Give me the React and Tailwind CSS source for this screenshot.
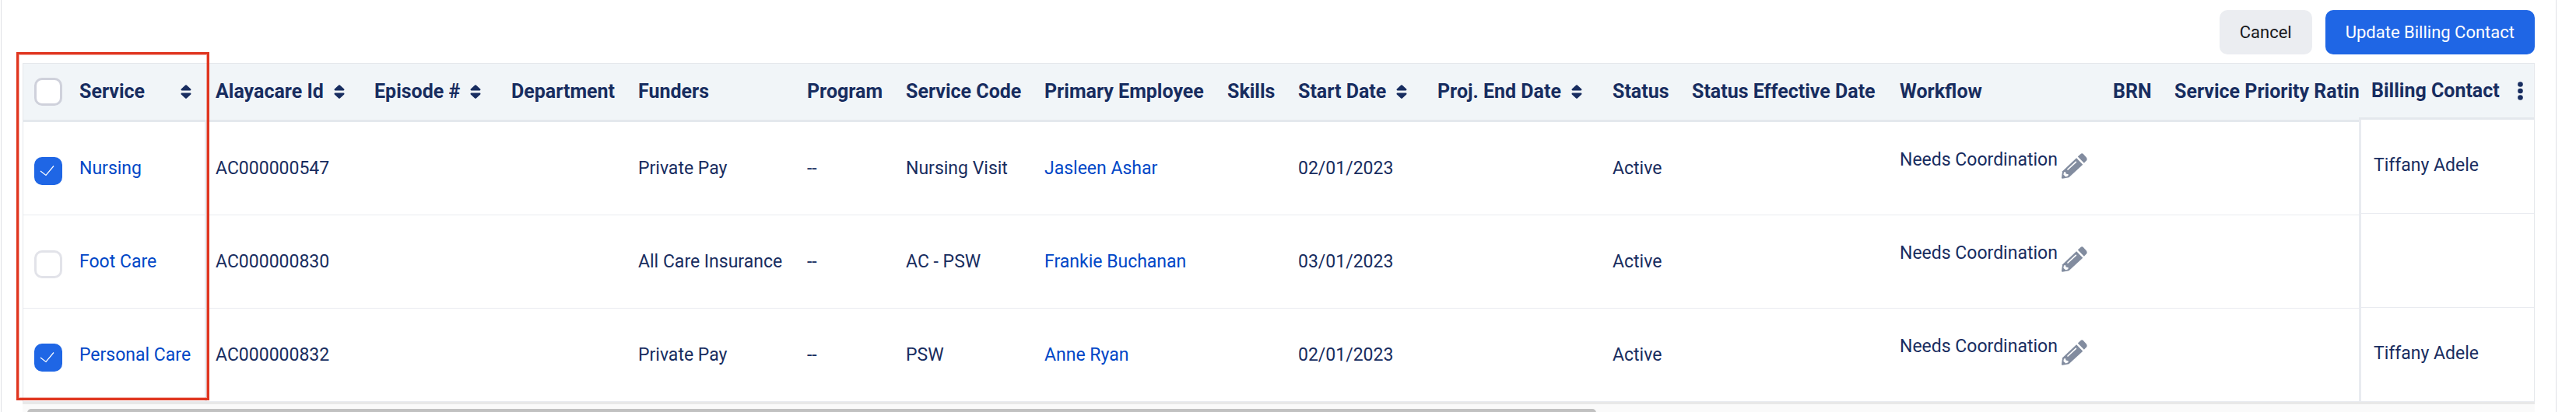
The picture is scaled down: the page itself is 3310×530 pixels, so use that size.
import React, { useState } from 'react';

const columns = [
  { key: 'id', label: 'Alayacare Id', width: 'w-[204px]', sortable: true },
  { key: 'episode', label: 'Episode #', width: 'w-[176px]', sortable: true },
  { key: 'department', label: 'Department', width: 'w-[163px]' },
  { key: 'funders', label: 'Funders', width: 'w-[217px]' },
  { key: 'program', label: 'Program', width: 'w-[127px]' },
  { key: 'code', label: 'Service Code', width: 'w-[178px]' },
  { key: 'employee', label: 'Primary Employee', width: 'w-[235px]' },
  { key: 'skills', label: 'Skills', width: 'w-[91px]' },
  { key: 'start', label: 'Start Date', width: 'w-[179px]', sortable: true },
  { key: 'end', label: 'Proj. End Date', width: 'w-[225px]', sortable: true },
  { key: 'status', label: 'Status', width: 'w-[102px]' },
  { key: 'statusDate', label: 'Status Effective Date', width: 'w-[267px]' },
  { key: 'workflow', label: 'Workflow', width: 'w-[274px]' },
  { key: 'brn', label: 'BRN', width: 'w-[79px]' },
  { key: 'rating', label: 'Service Priority Rating', width: 'w-[290px]' },
];

const services = [
  {
    name: 'Nursing',
    id: 'AC000000547',
    funders: 'Private Pay',
    program: '--',
    code: 'Nursing Visit',
    employee: 'Jasleen Ashar',
    start: '02/01/2023',
    status: 'Active',
    workflow: 'Needs Coordination',
    contact: 'Tiffany Adele',
  },
  {
    name: 'Foot Care',
    id: 'AC000000830',
    funders: 'All Care Insurance',
    program: '--',
    code: 'AC - PSW',
    employee: 'Frankie Buchanan',
    start: '03/01/2023',
    status: 'Active',
    workflow: 'Needs Coordination',
    contact: '',
  },
  {
    name: 'Personal Care',
    id: 'AC000000832',
    funders: 'Private Pay',
    program: '--',
    code: 'PSW',
    employee: 'Anne Ryan',
    start: '02/01/2023',
    status: 'Active',
    workflow: 'Needs Coordination',
    contact: 'Tiffany Adele',
  },
];

const SortIcon = () => (
  <svg className="w-3.5 h-[18px] shrink-0" viewBox="0 0 14 18" fill="currentColor" aria-hidden="true">
    <path d="M6.2 0.6Q7 -0.2 7.8 0.6L13.2 5.6Q14 7.4 12.4 7.4H1.6Q0 7.4 0.8 5.6Z" />
    <path d="M6.2 17.4Q7 18.2 7.8 17.4L13.2 12.4Q14 10.6 12.4 10.6H1.6Q0 10.6 0.8 12.4Z" />
  </svg>
);

const PencilIcon = () => (
  <svg className="w-[33px] h-[33px]" viewBox="0 0 33 33" fill="#828c9f" aria-hidden="true">
    <path d="M20.8 4.6L24.6 0.9Q26.2 -0.4 27.8 1L31.6 5.2Q33.4 7.4 32.2 9.2L28.9 12.8Z" />
    <path d="M19.1 6.2L27.3 14.7L9.4 31.2L1.2 32.7Q0 32.7 0 31.4L1.1 23.3Z" />
    <path d="M8 21L18.4 11.4" stroke="#fff" strokeWidth="1.7" strokeLinecap="round" />
    <path d="M3 24.4L5 24L5.6 26.6L8.8 27.2L8.4 29.3L5.4 30.4L2.4 27.8Z" fill="#fff" />
  </svg>
);

const KebabIcon = () => (
  <svg className="w-[7px] h-6" viewBox="0 0 7 24" fill="currentColor" aria-hidden="true">
    <circle cx="3.5" cy="3.5" r="3.3" />
    <circle cx="3.5" cy="12" r="3.3" />
    <circle cx="3.5" cy="20.5" r="3.3" />
  </svg>
);

const Checkbox = ({ label, checked, onChange, header }) => (
  <label className="grid shrink-0">
    <input
      type="checkbox"
      aria-label={label}
      checked={checked}
      onChange={onChange}
      className={`col-start-1 row-start-1 appearance-none w-9 h-9 rounded-[10px] border-3 bg-white checked:bg-[#1f66e5] checked:border-[#1f66e5] ${
        header ? 'border-[#cfd1db]' : 'border-[#e2e3e9]'
      }`}
    />
    {checked && (
      <svg className="col-start-1 row-start-1 w-9 h-9 pointer-events-none" viewBox="0 0 36 36" fill="none" aria-hidden="true">
        <path d="M8 18L15 23.5L25 11.5" stroke="#fff" strokeWidth="1.2" />
      </svg>
    )}
  </label>
);

const Cell = ({ column, service }) => {
  const value = service[column.key];

  if (column.key === 'workflow') {
    return (
      <td className="h-[120px] border-b border-[#e9ebf0] pl-[11px] pt-[35px] align-top">
        <div className="flex items-start gap-[5px]">
          <span>{value}</span>
          <button aria-label={`Edit workflow for ${service.name}`} className="pt-[5px]">
            <PencilIcon />
          </button>
        </div>
      </td>
    );
  }

  return (
    <td className="h-[120px] border-b border-[#e9ebf0] pl-[11px]">
      {column.key === 'employee' ? <a href="#employee" className="text-[#0047c7]">{value}</a> : value}
    </td>
  );
};

const App = () => {
  const [selected, setSelected] = useState(['Nursing', 'Personal Care']);

  const toggle = (name) => {
    setSelected(selected.includes(name) ? selected.filter((n) => n !== name) : [...selected, name]);
  };

  const allSelected = selected.length === services.length;

  return (
    <div className="bg-white font-[Roboto,sans-serif] text-[#182d60]">
      <main className="ml-px mr-[25px] border-x border-[#dfe1e6] px-[27px] pt-[13px]">
        <div className="flex justify-end gap-[17px] mb-[11px] text-[22px]">
          <button className="h-[57px] px-[26px] rounded-[10px] bg-[#ebedf1] text-[#17181c]">Cancel</button>
          <button className="h-[57px] px-[26px] rounded-[10px] bg-[#1f66e5] text-white">Update Billing Contact</button>
        </div>

        <div className="relative flex items-start text-[23px] leading-7 whitespace-nowrap">
          {/* Frozen service column */}
          <table className="w-[237px] shrink-0 table-fixed border-separate border-spacing-0 border-l border-t border-[#e5e8ec] text-left">
            <thead>
              <tr>
                <th className="h-[75px] bg-[#f1f5f8] border-b-3 border-[#e4e8ed] pl-3.5 pr-5">
                  <div className="flex items-center">
                    <Checkbox
                      header
                      label="Select all services"
                      checked={allSelected}
                      onChange={() => setSelected(allSelected ? [] : services.map((s) => s.name))}
                    />
                    <span className="pl-[22px] text-[25px] leading-7 font-bold">Service</span>
                    <button aria-label="Sort by service" className="ml-auto">
                      <SortIcon />
                    </button>
                  </div>
                </th>
              </tr>
            </thead>
            <tbody>
              {services.map((service) => (
                <tr key={service.name}>
                  <td className="h-[120px] border-b border-r-3 border-[#e9ebf0] pl-3.5">
                    <div className="flex items-end">
                      <div className="pt-1.5">
                        <Checkbox
                          label={`Select ${service.name}`}
                          checked={selected.includes(service.name)}
                          onChange={() => toggle(service.name)}
                        />
                      </div>
                      <a href="#service" className="pl-[22px] pb-[7px] text-[#0047c7]">{service.name}</a>
                    </div>
                  </td>
                </tr>
              ))}
            </tbody>
          </table>

          {/* Scrolling columns */}
          <div className="flex-1 min-w-0 overflow-hidden">
            <table className="w-[2807px] table-fixed border-separate border-spacing-0 border-t border-[#e5e8ec] text-left">
              <thead>
                <tr className="text-[25px] leading-7">
                  {columns.map((column) => (
                    <th key={column.key} className={`${column.width} h-[75px] bg-[#f1f5f8] border-b-3 border-[#e4e8ed] pl-[11px] font-bold`}>
                      <div className="flex items-center gap-[13px]">
                        {column.label}
                        {column.sortable && (
                          <button aria-label={`Sort by ${column.label}`}>
                            <SortIcon />
                          </button>
                        )}
                      </div>
                    </th>
                  ))}
                </tr>
              </thead>
              <tbody>
                {services.map((service) => (
                  <tr key={service.id}>
                    {columns.map((column) => (
                      <Cell key={column.key} column={column} service={service} />
                    ))}
                  </tr>
                ))}
              </tbody>
            </table>
          </div>

          {/* Frozen billing contact column */}
          <table className="w-[226px] shrink-0 table-fixed border-separate border-spacing-0 border-r border-t border-[#e5e8ec] text-left">
            <thead>
              <tr>
                <th className="h-[72px] bg-[#f1f5f8] border-b-3 border-[#e4e8ed] pl-4 pr-3.5">
                  <div className="flex items-center justify-between text-[25px] leading-7 font-bold">
                    Billing Contact
                    <button aria-label="Column options">
                      <KebabIcon />
                    </button>
                  </div>
                </th>
              </tr>
            </thead>
            <tbody>
              {services.map((service) => (
                <tr key={service.id}>
                  <td className="h-[121px] border-b border-l-3 border-[#e9ebf0] pl-4 pb-0.5">{service.contact}</td>
                </tr>
              ))}
            </tbody>
          </table>

          {/* Highlight around the selection column */}
          <div className="absolute -left-2 -top-3.5 w-[248px] h-[448px] border-3 border-[#e0351f] ring-1 ring-[#e0351f]/40 ring-inset pointer-events-none" />
        </div>

        {/* Horizontal scrollbar */}
        <div className="border-t-3 border-[#e8e8e8] bg-[#fafafa] px-1.5 pt-1.5">
          <div className="w-[62.7%] h-[5px] rounded-t-[6px] bg-[#c1c1c1]" />
        </div>
      </main>
    </div>
  );
};

export default App;
